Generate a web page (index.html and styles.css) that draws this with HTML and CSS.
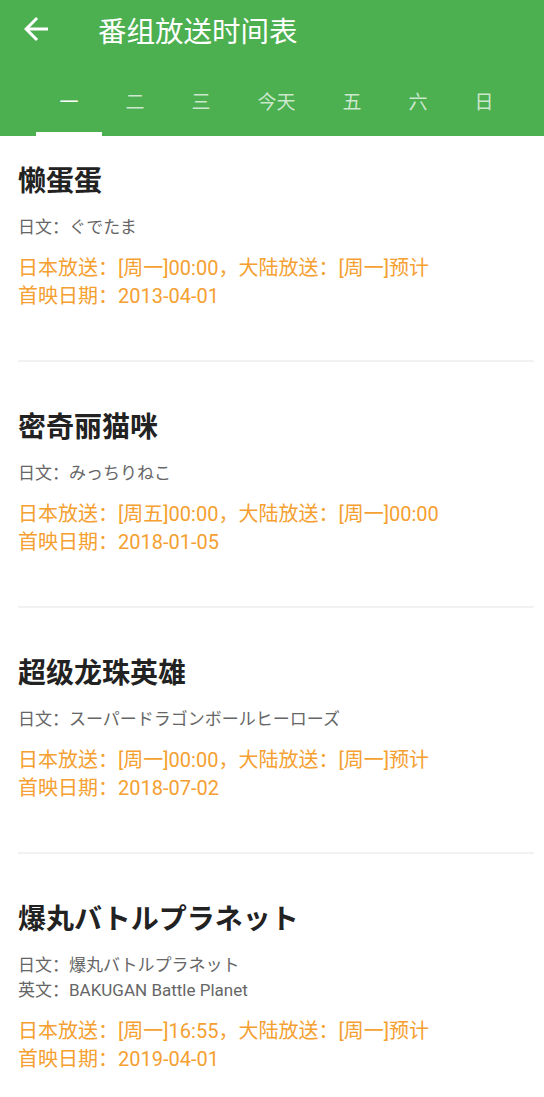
FILE: index.html
```html
<!DOCTYPE html>
<html lang="zh-CN">
<head>
    <meta charset="UTF-8">
    <meta name="viewport" content="width=device-width, initial-scale=1.0">
    <title>番组放送时间表</title>
    <link rel="stylesheet" href="styles.css">
</head>
<body>
    <div class="header">
        <div class="toolbar">
            <svg class="back" width="36" height="36" viewBox="0 0 24 24">
                <path d="M20 11H7.83l5.59-5.59L12 4l-8 8 8 8 1.41-1.41L7.83 13H20v-2z" fill="#fff"/>
            </svg>
            <div class="title">番组放送时间表</div>
        </div>
        <!-- tabs por dia -->
        <div class="tabs">
            <div class="tab active">一</div>
            <div class="tab">二</div>
            <div class="tab">三</div>
            <div class="tab">今天</div>
            <div class="tab">五</div>
            <div class="tab">六</div>
            <div class="tab">日</div>
        </div>
    </div>

    <div class="list">
        <div class="item">
            <div class="name">懒蛋蛋</div>
            <div class="sub">日文：ぐでたま</div>
            <div class="air">日本放送：[周一]00:00，大陆放送：[周一]预计<br>首映日期：2013-04-01</div>
        </div>
        <div class="item">
            <div class="name">密奇丽猫咪</div>
            <div class="sub">日文：みっちりねこ</div>
            <div class="air">日本放送：[周五]00:00，大陆放送：[周一]00:00<br>首映日期：2018-01-05</div>
        </div>
        <div class="item">
            <div class="name">超级龙珠英雄</div>
            <div class="sub">日文：スーパードラゴンボールヒーローズ</div>
            <div class="air">日本放送：[周一]00:00，大陆放送：[周一]预计<br>首映日期：2018-07-02</div>
        </div>
        <div class="item">
            <div class="name">爆丸バトルプラネット</div>
            <div class="sub">日文：爆丸バトルプラネット<br>英文：BAKUGAN Battle Planet</div>
            <div class="air">日本放送：[周一]16:55，大陆放送：[周一]预计<br>首映日期：2019-04-01</div>
        </div>
    </div>
</body>
</html>
```

FILE: styles.css
```css
body {
    margin: 0;
    background-color: #fff;
    font-family: Roboto, "Noto Sans CJK SC", sans-serif;
}
.header {
    background-color: #4caf50;
    color: #fff;
}
.toolbar {
    display: flex;
    align-items: center;
    height: 58px;
    padding-left: 18px;
}
.back {
    flex-shrink: 0;
}
.title {
    margin-left: 44px;
    font-size: 28.5px;
}
.tabs {
    display: flex;
    padding-left: 36px;
    height: 78px;
}
.tab {
    padding: 10px 23.5px 0;
    display: flex;
    align-items: center;
    justify-content: center;
    font-size: 19px;
    color: rgba(255, 255, 255, 0.72);
    border-bottom: 4px solid transparent;
}
.tab.active {
    color: #fff;
    border-bottom-color: #fff;
}
.item {
    margin: 0 10px 0 18px;
    padding: 48px 0 50px;
    border-bottom: 2px solid #f2f2f2;
}
.item:first-child {
    padding-top: 28px;
}
.item:last-child {
    border-bottom: none;
}
.name {
    font-size: 28px;
    line-height: 36px;
    font-weight: bold;
    color: #222;
}
.sub {
    margin-top: 15px;
    font-size: 17px;
    line-height: 25px;
    color: #666;
}
.air {
    margin-top: 14px;
    font-size: 20px;
    line-height: 28px;
    color: #f5a030;
}
```
